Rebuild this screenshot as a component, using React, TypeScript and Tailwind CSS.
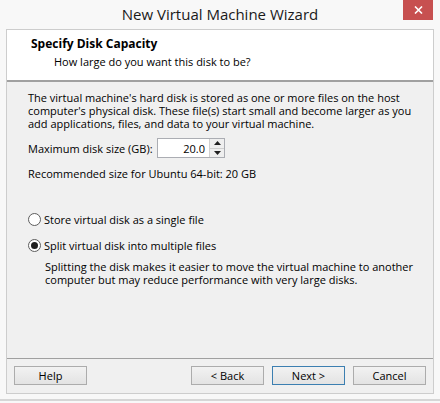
import { useState } from "react"

const font = "font-['Open_Sans','Noto_Sans',sans-serif]"

const Button = ({ label, primary }: { label: string; primary?: boolean }) => (
  <button
    className={`w-[73px] h-[19px] text-[11px] leading-none text-black bg-gradient-to-b from-[#f2f2f2] to-[#e3e3e3] border ${
      primary ? "border-[#3c7fb1]" : "border-[#acacac]"
    }`}
  >
    {label}
  </button>
)

const Radio = ({ checked, label, onClick }: { checked: boolean; label: string; onClick: () => void }) => (
  <div className="flex items-center gap-[3px] cursor-default" onClick={onClick}>
    <span className="w-[13px] h-[13px] rounded-full border border-[#5d5d5d] bg-white flex items-center justify-center">
      {checked && <span className="w-[7px] h-[7px] rounded-full bg-[#1f1f1f]" />}
    </span>
    <span>{label}</span>
  </div>
)

export default function App() {
  const [split, setSplit] = useState(true)
  const [size, setSize] = useState(20)

  return (
    <div className={`w-[440px] h-[403px] bg-[#f8f8f8] flex flex-col text-black ${font}`}>
      {/* TITLE BAR */}
      <div className="relative h-[29px] flex items-center justify-center">
        <span className="text-[15px] text-[#1a1a1a] -mt-[1px]">New Virtual Machine Wizard</span>
        <div className="absolute right-[7px] top-0 w-[30px] h-[20px] bg-[#c75050] flex items-center justify-center text-white">
          <svg width="9" height="8" viewBox="0 0 9 8">
            <path d="M1 0.5 L8 7.5 M8 0.5 L1 7.5" stroke="white" strokeWidth="1.6" />
          </svg>
        </div>
      </div>

      {/* CLIENT */}
      <div className="mx-[6px] h-[365px] border border-[#cdcdcd] flex flex-col text-[11px] leading-[13px]">
        {/* HEADER */}
        <div className="h-[52px] bg-white border-b-2 border-[#a0a0a0] pl-[24px] pt-[7px]">
          <div className="font-bold text-[12px] leading-[14px]">Specify Disk Capacity</div>
          <div className="pl-[23px] mt-[4px]">How large do you want this disk to be?</div>
        </div>

        {/* BODY */}
        <div className="flex-1 bg-[#f0f0f0] pl-[21px] pt-[9px]">
          <p>
            The virtual machine's hard disk is stored as one or more files on the host
            <br />
            computer's physical disk. These file(s) start small and become larger as you
            <br />
            add applications, files, and data to your virtual machine.
          </p>

          <div className="flex items-center mt-[8px] h-[20px]">
            <span className="w-[129px]">Maximum disk size (GB):</span>
            <div className="w-[68px] h-[20px] border border-[#abadb3] bg-white flex">
              <span className="flex-1 text-right pr-[4px] self-center">{size.toFixed(1)}</span>
              <div className="w-[15px] flex flex-col border-l border-[#d0d0d0]">
                <button
                  className="flex-1 flex items-center justify-center bg-[#efefef] border-b border-[#d0d0d0]"
                  onClick={() => setSize(size + 1)}
                >
                  <svg width="7" height="4" viewBox="0 0 7 4"><path d="M0 4 L3.5 0 L7 4 Z" fill="#202020" /></svg>
                </button>
                <button
                  className="flex-1 flex items-center justify-center bg-[#efefef]"
                  onClick={() => setSize(Math.max(1, size - 1))}
                >
                  <svg width="7" height="4" viewBox="0 0 7 4"><path d="M0 0 L3.5 4 L7 0 Z" fill="#202020" /></svg>
                </button>
              </div>
            </div>
          </div>

          <p className="mt-[9px]">Recommended size for Ubuntu 64-bit: 20 GB</p>

          <div className="mt-[33px] flex flex-col gap-[13px]">
            <Radio checked={!split} label="Store virtual disk as a single file" onClick={() => setSplit(false)} />
            <Radio checked={split} label="Split virtual disk into multiple files" onClick={() => setSplit(true)} />
          </div>

          <p className="pl-[17px] mt-[8px]">
            Splitting the disk makes it easier to move the virtual machine to another
            <br />
            computer but may reduce performance with very large disks.
          </p>
        </div>

        {/* FOOTER */}
        <div className="h-[35px] bg-[#f0f0f0] border-t border-[#a0a0a0] flex items-center px-[7px] pb-[1px]">
          <Button label="Help" />
          <div className="ml-auto flex gap-[8px]">
            <Button label="< Back" />
            <Button label="Next >" primary />
            <Button label="Cancel" />
          </div>
        </div>
      </div>

      <div className="mt-[5px] h-[2px] bg-[#d6d6d6]" />
    </div>
  )
}
